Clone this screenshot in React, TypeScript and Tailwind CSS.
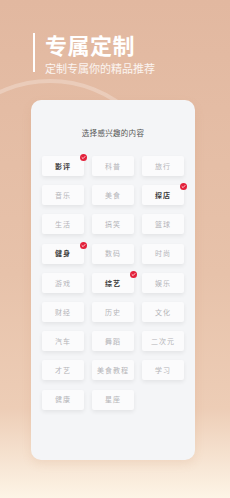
import React from 'react';

const tags: { name: string; on?: boolean }[] = [
  { name: '影评', on: true },
  { name: '科普' },
  { name: '旅行' },
  { name: '音乐' },
  { name: '美食' },
  { name: '探店', on: true },
  { name: '生活' },
  { name: '搞笑' },
  { name: '篮球' },
  { name: '健身', on: true },
  { name: '数码' },
  { name: '时尚' },
  { name: '游戏' },
  { name: '综艺', on: true },
  { name: '娱乐' },
  { name: '财经' },
  { name: '历史' },
  { name: '文化' },
  { name: '汽车' },
  { name: '舞蹈' },
  { name: '二次元' },
  { name: '才艺' },
  { name: '美食教程' },
  { name: '学习' },
  { name: '健康' },
  { name: '星座' },
];

function Tag({ name, on }: { name: string; on?: boolean }) {
  return (
    <div className="relative h-[20px] rounded-[2px] bg-[#fbfbfc] shadow-[0_2px_4px_rgba(0,0,0,0.07)] flex items-center justify-center">
      <span
        className={
          on
            ? 'text-[7px] tracking-[1px] font-semibold text-[#3a3a3a]'
            : 'text-[7px] tracking-[1px] text-[#b4b4b8]'
        }
      >
        {name}
      </span>
      {on && (
        <span className="absolute top-[-2px] right-[-3px] w-[7px] h-[7px] rounded-full bg-[#e3203a] flex items-center justify-center">
          <svg width="5" height="5" viewBox="0 0 10 10">
            <path d="M2 5.2 L4.2 7.2 L8 3" fill="none" stroke="#fff" strokeWidth="1.6" strokeLinecap="round" strokeLinejoin="round" />
          </svg>
        </span>
      )}
    </div>
  );
}

export default function App() {
  return (
    <div
      className="relative w-[230px] h-[498px] overflow-hidden bg-[linear-gradient(180deg,#e2b8a0_0%,#e7c2aa_55%,#edcdb6_82%,#fdf4e6_100%)]"
      style={{ fontFamily: '"Noto Sans CJK SC", "Noto Sans", sans-serif' }}
    >
      {/* faint arc */}
      <svg className="absolute left-0 top-0" width="230" height="200" viewBox="0 0 230 200">
        <circle cx="50" cy="200" r="119" fill="none" stroke="rgba(255,255,255,0.25)" strokeWidth="4" />
      </svg>

      <div className="relative flex pt-[33px] pl-[33px]">
        <div className="w-[2px] h-[39px] bg-white" />
        <div className="ml-[10px] flex flex-col">
          <div className="text-[22px] leading-[22px] font-bold text-white tracking-[0.5px]">专属定制</div>
          <div className="mt-[7px] text-[11px] leading-[12px] text-white/85">定制专属你的精品推荐</div>
        </div>
      </div>

      <div className="relative ml-[31px] mt-[26px] w-[164px] h-[360px] rounded-[10px] bg-[#f4f5f7] shadow-[0_4px_10px_rgba(200,140,100,0.15)] pt-[28px] px-[11px]">
        <div className="text-center text-[7.5px] leading-[10px] tracking-[0.3px] text-[#555]">选择感兴趣的内容</div>
        <div className="mt-[18px] grid grid-cols-3 gap-x-[8px] gap-y-[9.2px]">
          {tags.map((t) => (
            <Tag key={t.name} name={t.name} on={t.on} />
          ))}
        </div>
      </div>
    </div>
  );
}
